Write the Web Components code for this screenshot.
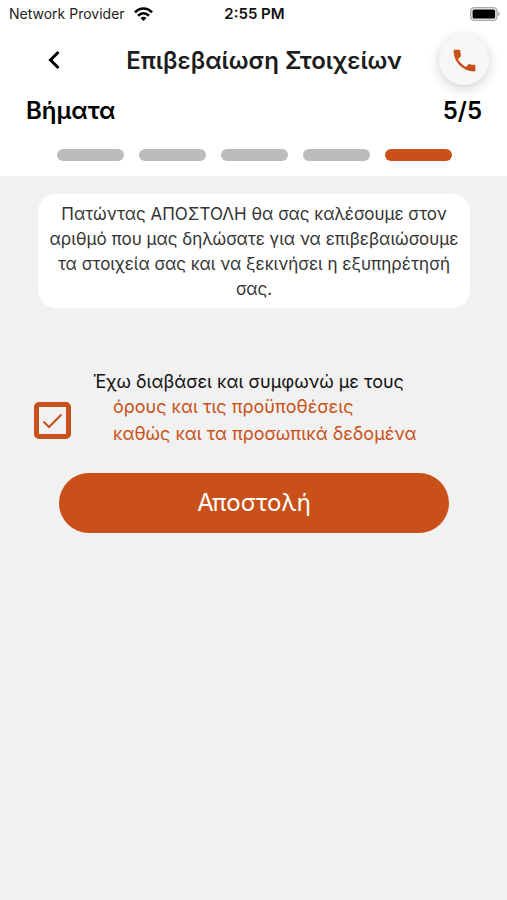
<!DOCTYPE html>
<html lang="el">
<head>
<meta charset="utf-8">
<meta name="viewport" content="width=device-width, initial-scale=1">
<title>Επιβεβαίωση Στοιχείων</title>
<style>
body { margin: 0; background: #f1f1f1; color: #111; font-family: Inter, "Liberation Sans", sans-serif; }
</style>
</head>
<body>
<confirm-screen></confirm-screen>
<script>
const define = (name, html, setup) => {
  const template = document.createElement("template");
  template.innerHTML = "<style>*{box-sizing:border-box}</style>" + html;
  customElements.define(name, class extends HTMLElement {
    constructor() {
      super();
      this.attachShadow({ mode: "open" }).append(template.content.cloneNode(true));
    }
    connectedCallback() { if (setup) setup(this, this.shadowRoot); }
  });
};

define("status-bar", `
<style>
:host { display: grid; grid-template-columns: 1fr auto 1fr; align-items: center; height: 28px; padding: 0 7px 0 9px; font-size: 14px; line-height: 20px; color: #222; }
.carrier { display: flex; align-items: center; gap: 9px; }
.time { font-size: 15px; font-weight: 600; color: #111; }
.battery { justify-self: end; }
svg { display: block; }
</style>
<div class="carrier"><span>Network Provider</span>
<svg width="19" height="14" viewBox="0 0 19 14" fill="none" stroke="#000" stroke-width="2.7"><path d="M1 5.400C6 .2 13 .2 18 5.400M4.100 8.700c3.200-3 7.600-3 10.800 0"/><path d="M6.500 11c1.800-1.600 4.200-1.600 6 0l-3 3z" fill="#000" stroke="none"/></svg></div>
<span class="time">2:55 PM</span>
<svg class="battery" width="30" height="14" viewBox="0 0 30 14"><rect x=".7" y=".7" width="26.3" height="12.6" rx="3.6" fill="#eee" stroke="#aaa" stroke-width="1.3"/><rect x="2.6" y="2.4" width="22.5" height="9.2" rx="1.5"/><path d="M28 4.8c2.2.6 2.2 3.8 0 4.4z" fill="#aaa"/></svg>`);

define("title-bar", `
<style>
:host { display: grid; grid-template-columns: 40px 1fr 50px; align-items: center; height: 64px; padding: 0 18px 0 34px; }
h1 { margin: 0; padding: 2px 0 0 15px; font-size: 24px; line-height: 32px; font-weight: 600; color: #1d1d1d; text-align: center; white-space: nowrap; }
button { display: grid; place-items: center; border: 0; padding: 0; background: none; width: 40px; height: 40px; }
.call { width: 50px; height: 50px; border-radius: 50%; background: #f7f7f7; box-shadow: 0 3px 12px #0003; }
</style>
<button aria-label="Πίσω"><svg width="14" height="20" viewBox="0 0 14 20" fill="none" stroke="#000" stroke-width="3"><path d="M11.5 2L3.5 10l8 8"/></svg></button>
<h1><slot></slot></h1>
<button class="call" aria-label="Κλήση"><svg width="29" height="29" viewBox="0 0 24 24" fill="#c95119"><path d="M6.6 10.8c1.4 2.8 3.8 5.1 6.6 6.6l2.2-2.2c.3-.3.7-.4 1-.2 1.1.4 2.3.6 3.6.6.6 0 1 .4 1 1V20c0 .6-.4 1-1 1C10.6 21 3 13.4 3 4c0-.6.4-1 1-1h3.5c.6 0 1 .4 1 1 0 1.3.2 2.5.6 3.6.1.4 0 .7-.2 1z"/></svg></button>`);

define("step-progress", `
<style>
:host { display: block; }
.head { display: flex; justify-content: space-between; padding: 3px 25px 0 26px; font-size: 24px; line-height: 32px; font-weight: 600; color: #000; }
ol { display: grid; grid-auto-flow: column; grid-auto-columns: 1fr; gap: 15px; list-style: none; margin: 0; padding: 22px 55px 15px 57px; }
li { height: 12px; border-radius: 6px; background: #bcbcbc; }
li.on { background: #c95119; }
</style>
<div class="head"><span><slot></slot></span><span class="count"></span></div>
<ol></ol>`, (el, root) => {
  const total = +el.getAttribute("total"), current = +el.getAttribute("current");
  root.querySelector(".count").textContent = current + "/" + total;
  const items = Array.from({ length: total }, (_, i) => {
    const li = document.createElement("li");
    if (i + 1 === current) li.className = "on";
    return li;
  });
  root.querySelector("ol").replaceChildren(...items);
});

define("info-card", `
<style>
:host { display: block; margin: 18px 37px 0 38px; padding: 8px 10px 6px; border-radius: 18px; background: #fff; color: #333; font-size: 17px; line-height: 25px; text-align: center; }
p { margin: 0; }
</style>
<p><slot></slot></p>`);

define("terms-consent", `
<style>
:host { display: grid; grid-template-columns: 37px 1fr; align-items: center; column-gap: 22px; margin: 62px 34px 0; font-size: 18px; }
input { appearance: none; display: block; width: 37px; height: 37px; margin: 24px 0 0; border: 5px solid #c95119; border-radius: 5px; }
input:checked { background: url("data:image/svg+xml,%3Csvg xmlns='http://www.w3.org/2000/svg' viewBox='0 0 27 27' fill='none' stroke='%23c95119' stroke-width='2'%3E%3Cpath d='M4.5 14.5l5.5 5.5L22.5 7.5'/%3E%3C/svg%3E") center / 27px 27px no-repeat; }
label { display: block; line-height: 23px; }
a { display: block; margin-left: 20px; color: #c95119; text-decoration: none; line-height: 27px; }
</style>
<input type="checkbox" id="terms" checked>
<div><label for="terms">Έχω διαβάσει και συμφωνώ με τους</label><a href="#terms">όρους και τις προϋποθέσεις</a><a href="#privacy">καθώς και τα προσωπικά δεδομένα</a></div>`);

define("submit-button", `
<style>
:host { display: block; margin: 26px 58px 0 59px; }
button { display: block; width: 100%; border: 0; border-radius: 30px; padding: 14px 24px; background: #c95119; color: #fff; font: 24px/32px Inter, "Liberation Sans", sans-serif; }
</style>
<button type="submit"><slot></slot></button>`);

define("confirm-screen", `
<style>
:host { display: block; min-height: 100vh; }
header { background: #fff; }
</style>
<header>
<status-bar></status-bar>
<title-bar>Επιβεβαίωση Στοιχείων</title-bar>
<step-progress total="5" current="5">Βήματα</step-progress>
</header>
<main>
<info-card>Πατώντας ΑΠΟΣΤΟΛΗ θα σας καλέσουμε στον αριθμό που μας δηλώσατε για να επιβεβαιώσουμε τα στοιχεία σας και να ξεκινήσει η εξυπηρέτησή σας.</info-card>
<terms-consent></terms-consent>
<submit-button>Αποστολή</submit-button>
</main>`);
</script>
</body>
</html>
